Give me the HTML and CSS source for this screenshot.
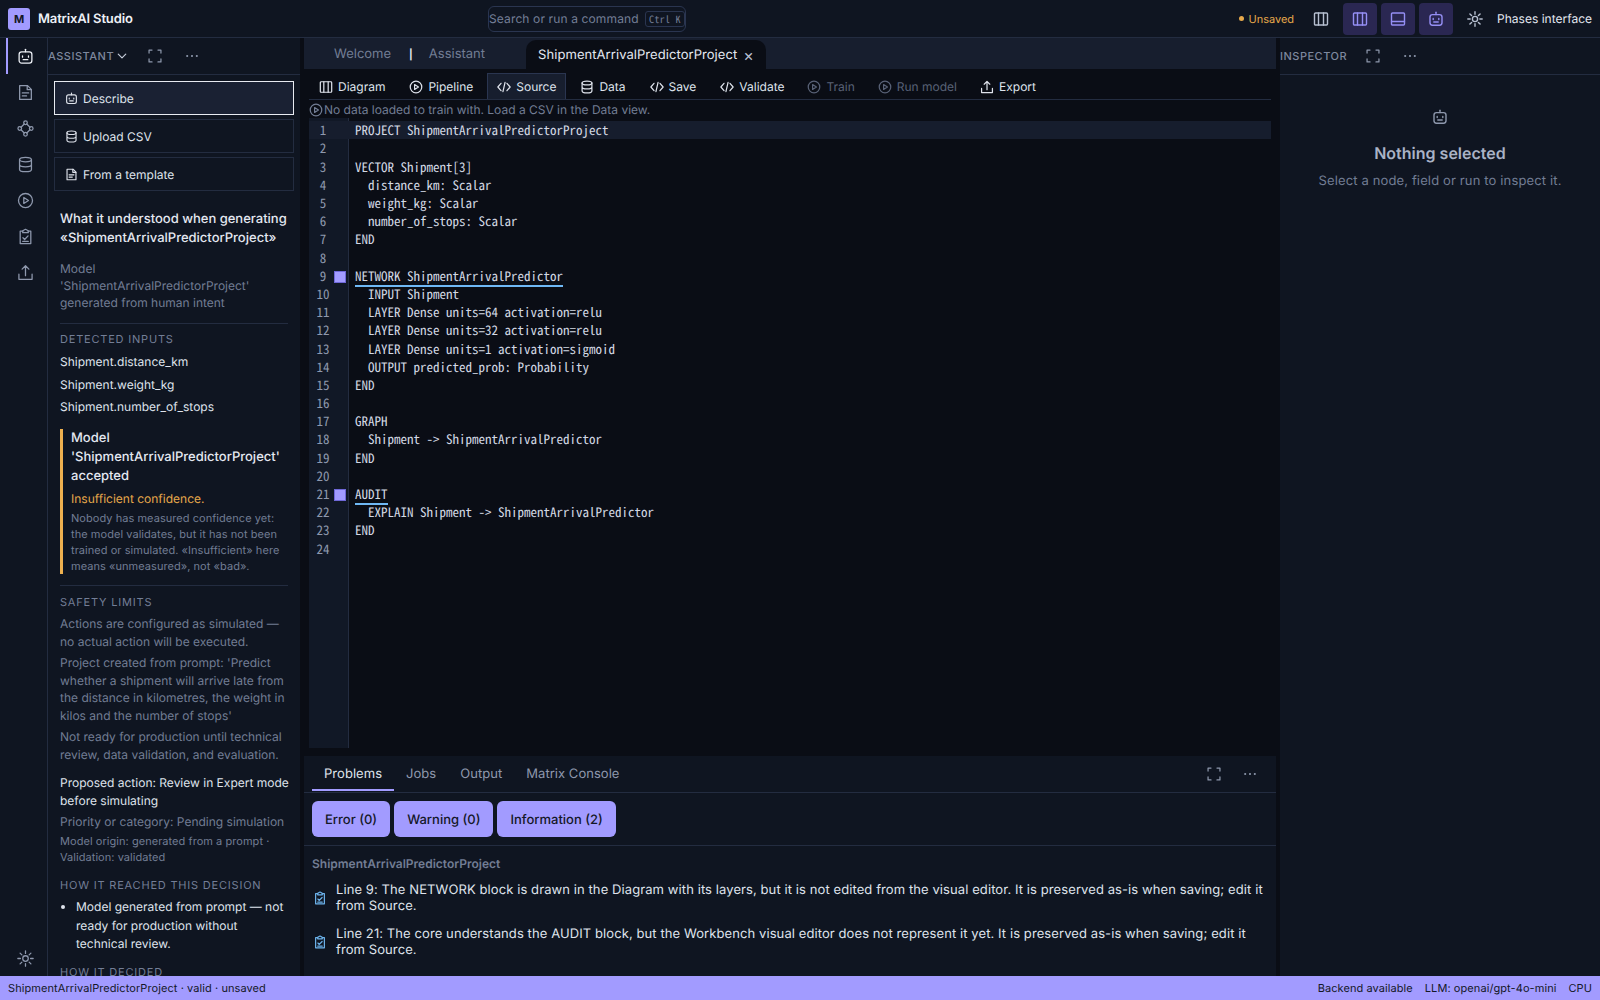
FILE: index.html
```html
<!DOCTYPE html>
<html lang="en">
<head>
<meta charset="UTF-8">
<title>MatrixAI Studio</title>
<link rel="stylesheet" href="styles.css">
</head>
<body>
<svg class="sprite" width="0" height="0">
  <symbol id="i-robot" viewBox="0 0 16 16"><path d="M8 1.2v2.3"/><rect x="2" y="3.6" width="12" height="10.6" rx="2.4"/><path d="M5.2 7.4v1.2M10.8 7.4v1.2M5.8 11h4.4"/></symbol>
  <symbol id="i-file" viewBox="0 0 16 16"><path d="M2.5 1.5h7.4l3.6 3.6v9.4h-11z"/><path d="M9.6 1.5v3.8h3.9M5 8.4h6M5 11.2h4"/></symbol>
  <symbol id="i-nodes" viewBox="0 0 16 16"><circle cx="8" cy="2.6" r="1.7"/><circle cx="8" cy="13.4" r="1.7"/><circle cx="2.6" cy="8" r="1.7"/><circle cx="13.4" cy="8" r="1.7"/><path d="M6.8 3.8 3.8 6.8M9.2 3.8l3 3M3.8 9.2l3 3M12.2 9.2l-3 3"/></symbol>
  <symbol id="i-db" viewBox="0 0 16 16"><ellipse cx="8" cy="3.4" rx="5.6" ry="2.2"/><path d="M2.4 3.4v9.2c0 1.2 2.5 2.2 5.6 2.2s5.6-1 5.6-2.2V3.4M2.4 8c0 1.2 2.5 2.2 5.6 2.2s5.6-1 5.6-2.2"/></symbol>
  <symbol id="i-play" viewBox="0 0 16 16"><circle cx="8" cy="8" r="6.6"/><path d="M6.4 5.2v5.6L10.8 8z"/></symbol>
  <symbol id="i-check" viewBox="0 0 16 16"><path d="M5.4 3H3v11.6h10V3h-2.4"/><path d="M5.4 4.4V2.6L8 1.2l2.6 1.4v1.8z"/><path d="m5.6 9.2 1.6 1.6 3.2-3.4M5.4 12.6h5.2"/></symbol>
  <symbol id="i-export" viewBox="0 0 16 16"><path d="M8 11V1.8M4.8 4.8 8 1.6l3.2 3.2M1.8 9.6v4.8h12.4V9.6"/></symbol>
  <symbol id="i-sun" viewBox="0 0 16 16"><circle cx="8" cy="8" r="2.6"/><path d="M8 .8v2.4M8 12.8v2.4M.8 8h2.4M12.8 8h2.4M2.9 2.9l1.7 1.7M11.4 11.4l1.7 1.7M13.1 2.9l-1.7 1.7M4.6 11.4l-1.7 1.7"/></symbol>
  <symbol id="i-columns" viewBox="0 0 16 16"><rect x="1.5" y="2" width="13" height="12" rx="1"/><path d="M5.5 2v12M10.5 2v12"/></symbol>
  <symbol id="i-bottom" viewBox="0 0 16 16"><rect x="1.5" y="2" width="13" height="12" rx="1"/><path d="M1.5 10.5h13"/></symbol>
  <symbol id="i-code" viewBox="0 0 16 16"><path d="M4.6 3.8 1 8l3.6 4.2M11.4 3.8 15 8l-3.6 4.2M9.2 2.6 6.8 13.4"/></symbol>
  <symbol id="i-expand" viewBox="0 0 16 16"><path d="M1.2 4.6V1.2h3.4M11.4 1.2h3.4v3.4M14.8 11.4v3.4h-3.4M4.6 14.8H1.2v-3.4"/></symbol>
  <symbol id="i-dots" viewBox="0 0 16 16"><circle class="solid" cx="2.5" cy="8" r="1.2"/><circle class="solid" cx="8" cy="8" r="1.2"/><circle class="solid" cx="13.5" cy="8" r="1.2"/></symbol>
  <symbol id="i-chevron" viewBox="0 0 16 16"><path d="m3 5.5 5 5 5-5"/></symbol>
</svg>

<header class="topbar">
  <div class="brand"><span class="logo">M</span><span class="brand-name">MatrixAI Studio</span></div>
  <div class="search"><span>Search or run a command</span><kbd>Ctrl K</kbd></div>
  <div class="top-actions">
    <span class="unsaved"><i></i>Unsaved</span>
    <button class="top-icon plain"><svg class="icon"><use href="#i-columns"/></svg></button>
    <button class="top-icon on"><svg class="icon"><use href="#i-columns"/></svg></button>
    <button class="top-icon on"><svg class="icon"><use href="#i-bottom"/></svg></button>
    <button class="top-icon on"><svg class="icon"><use href="#i-robot"/></svg></button>
    <button class="top-icon plain sun"><svg class="icon"><use href="#i-sun"/></svg></button>
    <span class="phases">Phases interface</span>
  </div>
</header>

<div class="workspace">
  <nav class="activity">
    <a class="act active"><svg class="icon"><use href="#i-robot"/></svg></a>
    <a class="act"><svg class="icon"><use href="#i-file"/></svg></a>
    <a class="act"><svg class="icon"><use href="#i-nodes"/></svg></a>
    <a class="act"><svg class="icon"><use href="#i-db"/></svg></a>
    <a class="act"><svg class="icon"><use href="#i-play"/></svg></a>
    <a class="act"><svg class="icon"><use href="#i-check"/></svg></a>
    <a class="act"><svg class="icon"><use href="#i-export"/></svg></a>
    <a class="act act-bottom"><svg class="icon"><use href="#i-sun"/></svg></a>
  </nav>

  <aside class="left">
    <div class="panel-head">
      <span class="panel-title">Assistant</span>
      <svg class="icon chev"><use href="#i-chevron"/></svg>
      <svg class="icon head-icon"><use href="#i-expand"/></svg>
      <svg class="icon head-icon"><use href="#i-dots"/></svg>
    </div>
    <div class="left-body">
      <div class="start-list">
        <button class="start active"><svg class="icon"><use href="#i-robot"/></svg>Describe</button>
        <button class="start"><svg class="icon"><use href="#i-db"/></svg>Upload CSV</button>
        <button class="start"><svg class="icon"><use href="#i-file"/></svg>From a template</button>
      </div>
      <div class="report">
        <h2>What it understood when generating «ShipmentArrivalPredictorProject»</h2>
        <p class="muted intro">Model 'ShipmentArrivalPredictorProject' generated from human intent</p>
        <hr>
        <h3>Detected inputs</h3>
        <ul class="inputs">
          <li>Shipment.distance_km</li>
          <li>Shipment.weight_kg</li>
          <li>Shipment.number_of_stops</li>
        </ul>
        <div class="callout">
          <div class="callout-title">Model 'ShipmentArrivalPredictorProject' accepted</div>
          <div class="callout-warn">Insufficient confidence.</div>
          <div class="small">Nobody has measured confidence yet: the model validates, but it has not been trained or simulated. «Insufficient» here means «unmeasured», not «bad».</div>
        </div>
        <hr>
        <h3>Safety limits</h3>
        <p class="muted">Actions are configured as simulated — no actual action will be executed.</p>
        <p class="muted">Project created from prompt: 'Predict whether a shipment will arrive late from the distance in kilometres, the weight in kilos and the number of stops'</p>
        <p class="muted">Not ready for production until technical review, data validation, and evaluation.</p>
        <p class="action">Proposed action: Review in Expert mode before simulating</p>
        <p class="muted">Priority or category: Pending simulation</p>
        <div class="small">Model origin: generated from a prompt · Validation: validated</div>
        <h3 class="after-small">How it reached this decision</h3>
        <ul class="bullets"><li>Model generated from prompt — not ready for production without technical review.</li></ul>
        <h3>How it decided</h3>
      </div>
    </div>
  </aside>

  <main class="center">
    <div class="editor-group">
      <div class="tabs">
        <span class="tab">Welcome</span>
        <span class="tab-sep">|</span>
        <span class="tab">Assistant</span>
        <span class="tab current">ShipmentArrivalPredictorProject<b class="close">×</b></span>
      </div>
      <div class="toolbar">
        <button class="tool"><svg class="icon"><use href="#i-columns"/></svg>Diagram</button>
        <button class="tool"><svg class="icon"><use href="#i-play"/></svg>Pipeline</button>
        <button class="tool selected"><svg class="icon"><use href="#i-code"/></svg>Source</button>
        <button class="tool"><svg class="icon"><use href="#i-db"/></svg>Data</button>
        <button class="tool"><svg class="icon"><use href="#i-code"/></svg>Save</button>
        <button class="tool"><svg class="icon"><use href="#i-code"/></svg>Validate</button>
        <button class="tool off"><svg class="icon"><use href="#i-play"/></svg>Train</button>
        <button class="tool off"><svg class="icon"><use href="#i-play"/></svg>Run model</button>
        <button class="tool"><svg class="icon"><use href="#i-export"/></svg>Export</button>
      </div>
      <div class="notice"><svg class="icon"><use href="#i-play"/></svg>No data loaded to train with. Load a CSV in the Data view.</div>
      <div class="code">
        <div class="ln cur"><span class="no">1</span><span class="tx">PROJECT ShipmentArrivalPredictorProject</span></div>
        <div class="ln"><span class="no">2</span><span class="tx"></span></div>
        <div class="ln"><span class="no">3</span><span class="tx">VECTOR Shipment[3]</span></div>
        <div class="ln"><span class="no">4</span><span class="tx">  distance_km: Scalar</span></div>
        <div class="ln"><span class="no">5</span><span class="tx">  weight_kg: Scalar</span></div>
        <div class="ln"><span class="no">6</span><span class="tx">  number_of_stops: Scalar</span></div>
        <div class="ln"><span class="no">7</span><span class="tx">END</span></div>
        <div class="ln"><span class="no">8</span><span class="tx"></span></div>
        <div class="ln"><span class="no">9</span><i class="mark"></i><span class="tx"><u>NETWORK ShipmentArrivalPredictor</u></span></div>
        <div class="ln"><span class="no">10</span><span class="tx">  INPUT Shipment</span></div>
        <div class="ln"><span class="no">11</span><span class="tx">  LAYER Dense units=64 activation=relu</span></div>
        <div class="ln"><span class="no">12</span><span class="tx">  LAYER Dense units=32 activation=relu</span></div>
        <div class="ln"><span class="no">13</span><span class="tx">  LAYER Dense units=1 activation=sigmoid</span></div>
        <div class="ln"><span class="no">14</span><span class="tx">  OUTPUT predicted_prob: Probability</span></div>
        <div class="ln"><span class="no">15</span><span class="tx">END</span></div>
        <div class="ln"><span class="no">16</span><span class="tx"></span></div>
        <div class="ln"><span class="no">17</span><span class="tx">GRAPH</span></div>
        <div class="ln"><span class="no">18</span><span class="tx">  Shipment -&gt; ShipmentArrivalPredictor</span></div>
        <div class="ln"><span class="no">19</span><span class="tx">END</span></div>
        <div class="ln"><span class="no">20</span><span class="tx"></span></div>
        <div class="ln"><span class="no">21</span><i class="mark"></i><span class="tx"><u>AUDIT</u></span></div>
        <div class="ln"><span class="no">22</span><span class="tx">  EXPLAIN Shipment -&gt; ShipmentArrivalPredictor</span></div>
        <div class="ln"><span class="no">23</span><span class="tx">END</span></div>
        <div class="ln"><span class="no">24</span><span class="tx"></span></div>
      </div>
    </div>

    <section class="bottom">
      <div class="bottom-tabs">
        <span class="btab current">Problems</span>
        <span class="btab">Jobs</span>
        <span class="btab">Output</span>
        <span class="btab">Matrix Console</span>
        <svg class="icon head-icon push"><use href="#i-expand"/></svg>
        <svg class="icon head-icon"><use href="#i-dots"/></svg>
      </div>
      <div class="filters">
        <button class="filter">Error (0)</button>
        <button class="filter">Warning (0)</button>
        <button class="filter">Information (2)</button>
      </div>
      <div class="problems">
        <div class="prob-title">ShipmentArrivalPredictorProject</div>
        <div class="prob"><svg class="icon"><use href="#i-check"/></svg><span>Line 9: The NETWORK block is drawn in the Diagram with its layers, but it is not edited from the visual editor. It is preserved as-is when saving; edit it from Source.</span></div>
        <div class="prob"><svg class="icon"><use href="#i-check"/></svg><span>Line 21: The core understands the AUDIT block, but the Workbench visual editor does not represent it yet. It is preserved as-is when saving; edit it from Source.</span></div>
      </div>
    </section>
  </main>

  <aside class="right">
    <div class="panel-head right-head">
      <span class="panel-title">Inspector</span>
      <svg class="icon head-icon"><use href="#i-expand"/></svg>
      <svg class="icon head-icon"><use href="#i-dots"/></svg>
    </div>
    <div class="empty">
      <svg class="icon"><use href="#i-robot"/></svg>
      <strong>Nothing selected</strong>
      <span>Select a node, field or run to inspect it.</span>
    </div>
  </aside>
</div>

<footer class="status">
  <span>ShipmentArrivalPredictorProject · valid · unsaved</span>
  <span class="status-right"><span>Backend available</span><span>LLM: openai/gpt-4o-mini</span><span>CPU</span></span>
</footer>
</body>
</html>
```

FILE: styles.css
```css
* {
  box-sizing: border-box;
}
html, body {
  height: 100%;
}
body {
  margin: 0;
  height: 1000px;
  display: flex;
  flex-direction: column;
  overflow: hidden;
  font-family: Inter, "Noto Sans", sans-serif;
  font-size: 12px;
  color: #e4e8f1;
  background-color: #0f1521;
  text-rendering: geometricPrecision;
}
button {
  font-family: inherit;
  color: inherit;
  background: none;
  border: none;
  padding: 0;
  text-rendering: inherit;
}
.sprite {
  position: absolute;
}
.icon {
  width: 16px;
  height: 16px;
  flex: none;
  fill: none;
  stroke: currentColor;
  stroke-width: 1.4;
  stroke-linecap: round;
  stroke-linejoin: round;
}
.solid {
  fill: currentColor;
  stroke: none;
}

/* top bar */
.topbar {
  height: 38px;
  flex: none;
  display: flex;
  align-items: center;
  padding: 0 8px;
  border-bottom: 1px solid #232c40;
}
.brand {
  display: flex;
  align-items: center;
  gap: 8px;
  width: 480px;
}
.logo {
  width: 22px;
  height: 22px;
  border-radius: 3px;
  background-color: #a29bff;
  color: #141827;
  font-size: 11px;
  font-weight: 700;
  display: flex;
  align-items: center;
  justify-content: center;
}
.brand-name {
  font-weight: 600;
  font-size: 13px;
  letter-spacing: -0.15px;
  color: #eef1f7;
}
.search {
  width: 198px;
  height: 26px;
  display: flex;
  align-items: center;
  justify-content: space-between;
  border: 1px solid #2a3550;
  border-radius: 6px;
  color: #747f97;
  letter-spacing: 0.13px;
  white-space: nowrap;
}
.search kbd {
  font-family: "Noto Sans Mono CJK SC", "Liberation Mono", monospace;
  font-size: 10px;
  width: 40px;
  height: 16px;
  line-height: 14px;
  text-align: center;
  letter-spacing: 0.3px;
  border: 1px solid #2a3550;
  border-radius: 3px;
}
.top-actions {
  margin-left: auto;
  display: flex;
  align-items: center;
  gap: 4px;
}
.unsaved {
  color: #e7a94b;
  font-size: 11px;
  display: flex;
  align-items: center;
  gap: 4px;
  margin-right: 6px;
}
.unsaved i {
  width: 5px;
  height: 5px;
  border-radius: 50%;
  background-color: #e7a94b;
}
.top-icon {
  width: 34px;
  height: 32px;
  display: flex;
  align-items: center;
  justify-content: center;
  border-radius: 4px;
}
.top-icon.plain {
  color: #b6bfd0;
  margin-right: 1px;
}
.top-icon.on {
  background-color: #2a2752;
  color: #958ff5;
}
.top-icon.sun {
  margin-left: 1px;
}
.phases {
  color: #e4e8f1;
}

/* columns */
.workspace {
  flex: 1;
  min-height: 0;
  display: flex;
}
.activity {
  width: 48px;
  flex: none;
  display: flex;
  flex-direction: column;
  border-right: 1px solid #232c40;
}
.act {
  height: 36px;
  flex: none;
  display: flex;
  align-items: center;
  justify-content: center;
  color: #8e98ad;
  position: relative;
  padding-left: 3px;
}
.act .icon {
  width: 17px;
  height: 17px;
  stroke-width: 1.2;
}
.act.active {
  color: #eef1f7;
}
.act.active::before {
  content: "";
  position: absolute;
  left: 6px;
  top: 0;
  bottom: 0;
  width: 2px;
  background-color: #a29bff;
}
.act-bottom {
  margin-top: auto;
}
.left {
  width: 252px;
  flex: none;
  display: flex;
  flex-direction: column;
  overflow: hidden;
}
.panel-head {
  height: 37px;
  flex: none;
  display: flex;
  align-items: center;
  border-bottom: 1px solid #232c40;
  color: #8e98ad;
}
.panel-title {
  text-transform: uppercase;
  font-size: 11px;
  font-weight: 500;
  letter-spacing: 0.5px;
  color: #7e889e;
}
.chev {
  width: 12px;
  height: 12px;
  margin-left: 2px;
  color: #c3cad8;
  stroke-width: 1.6;
}
.head-icon {
  width: 14px;
  height: 14px;
  margin-left: 20px;
  color: #8e98ad;
}
.right-head .head-icon {
  margin-left: 19px;
}
.head-icon + .head-icon,
.right-head .head-icon + .head-icon {
  margin-left: 22.5px;
}
.left-body {
  flex: 1;
  min-height: 0;
  overflow: hidden;
}
.start-list {
  padding: 6px 6px 0 6px;
  display: flex;
  flex-direction: column;
  gap: 4px;
}
.start {
  height: 34px;
  display: flex;
  align-items: center;
  gap: 5px;
  padding-left: 10px;
  border: 1px solid #232c40;
  font-size: 12px;
  color: #dfe3ec;
  text-align: left;
}
.start .icon {
  width: 13px;
  height: 13px;
}
.start.active {
  border-color: #e8ebf2;
  background-color: #1a2133;
}
.report {
  padding: 19px 10px 0 12px;
}
.report h2 {
  margin: 0;
  font-size: 13px;
  line-height: 18.6px;
  font-weight: 500;
  color: #e4e8f1;
}
.report hr {
  border: none;
  border-top: 1px solid #232c40;
  margin: 12px 2px 0 0;
}
.report .callout + hr {
  margin-top: 11px;
}
.report h3 {
  margin: 8px 0 0 0;
  font-size: 11px;
  line-height: 15px;
  font-weight: 400;
  letter-spacing: 0.8px;
  text-transform: uppercase;
  color: #737e96;
}
.report .callout + hr + h3 {
  margin-top: 9px;
}
.report h3.after-small {
  margin-top: 13px;
}
.report p {
  margin: 0;
  line-height: 17.5px;
}
.muted {
  color: #727d94;
}
.report .muted {
  margin-top: 4px;
}
.report h3 + .muted {
  margin-top: 5px;
}
.report .intro {
  margin-top: 13px;
  max-width: 220px;
  line-height: 17px;
}
.inputs {
  list-style: none;
  margin: 0;
  padding: 0;
}
.inputs li {
  height: 22.4px;
  line-height: 22px;
  color: #dfe3ec;
}
.inputs li:first-child {
  margin-top: 4px;
}
.callout {
  margin-top: 11px;
  border-left: 3px solid #eeb04f;
  padding-left: 8px;
}
.callout-title {
  font-size: 13px;
  line-height: 19px;
  font-weight: 500;
  color: #e4e8f1;
}
.callout-warn {
  margin-top: 3px;
  line-height: 19px;
  color: #e7a94b;
}
.small {
  font-size: 11px;
  line-height: 16px;
  letter-spacing: 0.05px;
  color: #727d94;
}
.callout .small {
  margin-top: 2px;
}
.report p + .small {
  margin-top: 2px;
}
.report .action {
  margin-top: 11px;
  color: #dfe3ec;
}
.bullets {
  margin: 5px 0 0 0;
  padding-left: 16px;
  line-height: 18.7px;
  color: #dfe3ec;
}
.bullets + h3 {
  margin-top: 11px;
}

/* center */
.center {
  width: 980px;
  flex: none;
  display: flex;
  flex-direction: column;
  padding: 0 4px;
  background-color: #0a0d15;
}
.editor-group {
  flex: 1;
  min-height: 0;
  display: flex;
  flex-direction: column;
}
.tabs {
  height: 31px;
  flex: none;
  display: flex;
  align-items: flex-end;
  background-color: #171e2e;
  font-size: 13px;
  color: #727d94;
  padding-left: 30px;
}
.tab {
  height: 29px;
  line-height: 28px;
}
.tab-sep {
  height: 29px;
  line-height: 30px;
  margin: 0 16px 0 18px;
  color: #e4e8f1;
  font-size: 10px;
  font-weight: 700;
}
.tab.current {
  width: 240px;
  margin-left: 41px;
  padding-left: 12px;
  background-color: #0a0d15;
  color: #e4e8f1;
  border-radius: 10px 10px 0 0;
  display: flex;
  align-items: center;
  line-height: normal;
  letter-spacing: 0.06px;
}
.close {
  font-weight: 400;
  font-size: 16px;
  margin-left: 6px;
  color: #b6bfd0;
}
.toolbar {
  height: 31px;
  flex: none;
  margin: 0 5px;
  display: flex;
  align-items: flex-end;
  border-bottom: 1px solid #232c40;
}
.tool {
  height: 26px;
  display: flex;
  align-items: center;
  gap: 5px;
  padding: 0 9px;
  margin-right: 4px;
  font-size: 12px;
  color: #dfe3ec;
  border: 1px solid transparent;
  border-bottom: none;
}
.tool .icon {
  width: 14px;
  height: 14px;
}
.tool.selected {
  background-color: #171e2e;
  border-color: #2a3550;
}
.tool.off {
  color: #596277;
  margin-left: -1px;
}
.tool:last-child {
  margin-left: -1px;
}
.notice {
  height: 18px;
  flex: none;
  margin: 0 5px;
  padding-top: 1px;
  display: flex;
  align-items: center;
  gap: 1px;
  color: #727d94;
}
.notice .icon {
  width: 14px;
  height: 14px;
}
.code {
  flex: 1;
  min-height: 0;
  margin: 0 5px;
  padding-top: 3.3px;
  font-family: "Noto Sans Mono CJK SC", "Liberation Mono", monospace;
  font-size: 13px;
  color: #d3d9e4;
  overflow: hidden;
  background: linear-gradient(#232c40, #232c40) no-repeat 39px 0 / 1px 100%,
              linear-gradient(#111826, #111826) no-repeat 0 0 / 39px 100%;
}
.ln {
  height: 18.2px;
  display: flex;
  position: relative;
  line-height: 18.2px;
}
.ln.cur {
  background-color: #161d2d;
}
.no {
  width: 40px;
  flex: none;
  color: #8e98ad;
  padding-left: 5px;
  padding-right: 17px;
  text-align: center;
}
.tx {
  flex: 1;
  padding-left: 6px;
  white-space: pre;
}
.tx u {
  text-decoration: none;
  box-shadow: 0 2px 0 #6fb8f5;
  display: inline-block;
  height: 18px;
}
.mark {
  position: absolute;
  left: 25px;
  top: 4px;
  width: 12px;
  height: 12px;
  background-color: #a29bff;
  border: 1px solid #6f68d8;
}
.bottom {
  height: 220px;
  flex: none;
  margin-top: 8px;
  background-color: #0f1521;
  display: flex;
  flex-direction: column;
}
.bottom-tabs {
  height: 37px;
  flex: none;
  display: flex;
  align-items: stretch;
  padding: 0 19px 0 8px;
  border-bottom: 1px solid #232c40;
  font-size: 13px;
  letter-spacing: 0.04px;
  color: #8e98ad;
}
.btab {
  padding: 0 12px;
  line-height: 36px;
}
.btab.current {
  color: #dfe3ec;
  border-bottom: 2px solid #a29bff;
  height: 35px;
}
.bottom-tabs .icon {
  align-self: center;
}
.head-icon.push {
  margin-left: auto;
}
.filters {
  height: 53px;
  flex: none;
  display: flex;
  align-items: center;
  gap: 4px;
  padding: 0 8px;
  border-bottom: 1px solid #232c40;
}
.filter {
  height: 36px;
  padding: 1px 13px 0 13px;
  background-color: #a29bff;
  color: #141827;
  border-radius: 6px;
  font-size: 13px;
  font-weight: 500;
}
.problems {
  padding: 9px 8px 0 8px;
}
.prob-title {
  font-weight: 600;
  line-height: 18px;
  color: #727d94;
}
.prob {
  display: flex;
  align-items: center;
  gap: 9px;
  margin-top: 9px;
  font-size: 13px;
  line-height: 16px;
  letter-spacing: 0.09px;
  color: #dfe3ec;
}
.prob + .prob {
  margin-top: 12px;
}
.prob .icon {
  width: 14px;
  height: 14px;
  color: #6cb2ea;
  margin-left: 1px;
}

/* inspector */
.right {
  flex: 1;
  min-width: 0;
  display: flex;
  flex-direction: column;
}
.empty {
  display: flex;
  flex-direction: column;
  align-items: center;
  padding-top: 34px;
  color: #727d94;
}
.empty .icon {
  color: #8e98ad;
}
.empty strong {
  margin-top: 16px;
  font-size: 16px;
  line-height: 24px;
  font-weight: 600;
  color: #aab3c6;
}
.empty span {
  margin-top: 8px;
  font-size: 13px;
  letter-spacing: 0.14px;
}

/* status bar */
.status {
  height: 24px;
  flex: none;
  display: flex;
  align-items: center;
  justify-content: space-between;
  padding: 0 8px;
  background-color: #a29bff;
  color: #141827;
  font-size: 11px;
  letter-spacing: 0.08px;
}
.status-right {
  display: flex;
  gap: 12px;
}
```
